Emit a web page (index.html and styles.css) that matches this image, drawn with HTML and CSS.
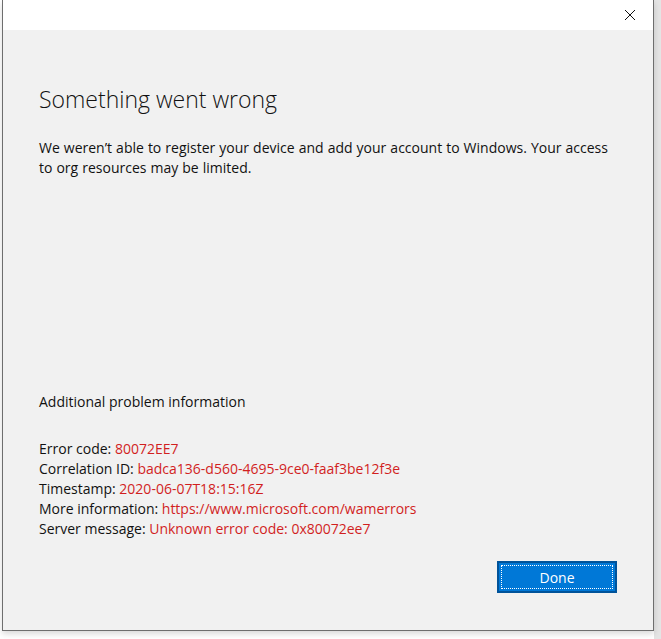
FILE: index.html
```html
<!DOCTYPE html>
<html>
<head>
  <meta charset="utf-8" />
  <title>Something went wrong</title>
  <link rel="stylesheet" href="styles.css">
</head>
<body>
  <div class="window">
    <div class="titlebar">
      <span class="close">
        <svg width="12" height="12" viewBox="0 0 12 12"><path d="M1 1L11 11M11 1L1 11" stroke="#111" stroke-width="1" fill="none"/></svg>
      </span>
    </div>
    <div class="content">
      <h1>Something went wrong</h1>
      <p class="message">We weren’t able to register your device and add your account to Windows. Your access to org resources may be limited.</p>

      <div class="details">
        <div class="details-title">Additional problem information</div>
        <div class="info">
          <div>Error code: <span class="val">80072EE7</span></div>
          <div>Correlation ID: <span class="val">badca136-d560-4695-9ce0-faaf3be12f3e</span></div>
          <div>Timestamp: <span class="val">2020-06-07T18:15:16Z</span></div>
          <div>More information: <span class="val">https://www.microsoft.com/wamerrors</span></div>
          <div>Server message: <span class="val">Unknown error code: 0x80072ee7</span></div>
        </div>
      </div>

      <div class="actions">
        <button class="done"><span>Done</span></button>
      </div>
    </div>
  </div>
</body>
</html>
```

FILE: styles.css
```css
html, body {
  margin: 0;
  height: 100%;
}

body {
  background: linear-gradient(to right, #fff 0, #fff 654px, #e4e4e4 654px);
  font-family: "Open Sans", "Noto Sans", sans-serif;
  color: #111;
  overflow: hidden;
}

.window {
  box-sizing: border-box;
  margin-left: 2px;
  width: 652px;
  height: 631px;
  border: 1px solid #6e6e6e;
  border-top: none;
  background: #f1f1f1;
  display: flex;
  flex-direction: column;
  box-shadow: 0 3px 6px rgba(0,0,0,0.15);
}

.titlebar {
  height: 30px;
  background: #fff;
  display: flex;
  justify-content: flex-end;
  align-items: center;
}

.close {
  width: 46px;
  height: 30px;
  display: flex;
  align-items: center;
  justify-content: center;
}

.content {
  flex: 1;
  display: flex;
  flex-direction: column;
  padding: 0 36px 37px 36px;
}

h1 {
  font-weight: 300;
  font-size: 23px;
  line-height: 30px;
  margin: 54px 0 0 0;
  color: #111;
}

.message {
  font-size: 14px;
  line-height: 20px;
  margin: 24px 0 0 0;
  word-spacing: 0.4px;
}

.details {
  margin-top: auto;
  font-size: 14px;
  line-height: 20px;
}

.details-title {
  margin-bottom: 27px;
}

.val {
  color: #d11f1f;
}

.actions {
  display: flex;
  justify-content: flex-end;
  margin-top: 22px;
}

.done {
  width: 120px;
  height: 32px;
  padding: 0;
  background: #0078d7;
  border: 2px solid #00539a;
  color: #fff;
  font-family: inherit;
  font-size: 14px;
  position: relative;
}

.done span {
  display: flex;
  align-items: center;
  justify-content: center;
  position: absolute;
  inset: 2px;
  border: 1px dotted #fff;
}
```
